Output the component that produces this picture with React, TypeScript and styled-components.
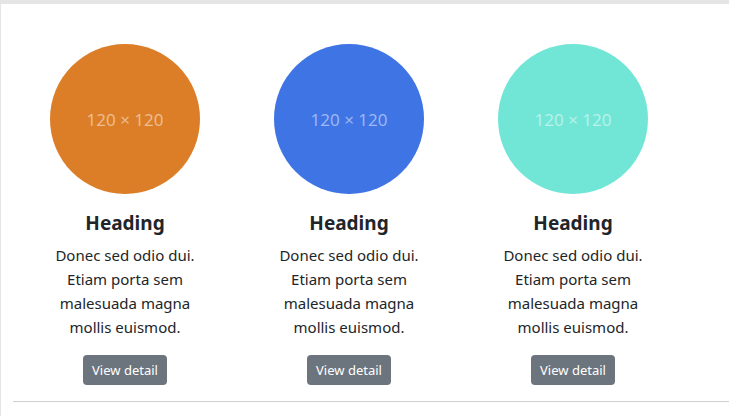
import React from "react";
import styled, { createGlobalStyle } from "styled-components";

const Global = createGlobalStyle`
  html, body { margin: 0; padding: 0; background: #fff; }
  body { font-family: "Noto Sans", "Open Sans", sans-serif; color: #212529; }
`;

const Frame = styled.div`
  border-top: 4px solid #e5e5e5;
  border-left: 1px solid #e5e5e5;
  min-height: 416px;
  box-sizing: border-box;
  padding: 40px 0 0 12px;
`;

const Row = styled.div`
  display: grid;
  grid-template-columns: repeat(3, 224px);
`;

const Col = styled.div`
  display: flex;
  flex-direction: column;
  align-items: center;
  text-align: center;
`;

const Circle = styled.div<{ $bg: string }>`
  width: 150px;
  height: 150px;
  border-radius: 50%;
  background: ${(p) => p.$bg};
  display: flex;
  align-items: center;
  justify-content: center;
  color: rgba(255, 255, 255, 0.5);
  font-family: "Open Sans", "Noto Sans", sans-serif;
  font-size: 17px;
`;

const Heading = styled.h2`
  margin: 17px 0 8px;
  font-size: 19px;
  line-height: 24px;
  font-weight: 700;
  color: #212529;
`;

const Text = styled.p`
  margin: 0 0 16px;
  width: 170px;
  font-size: 15px;
  line-height: 24px;
`;

const Button = styled.button`
  border: none;
  border-radius: 4px;
  background: #6c757d;
  color: #fff;
  font-family: inherit;
  font-size: 13px;
  height: 30px;
  padding: 0 9px;
  cursor: pointer;
`;

const Rule = styled.hr`
  margin: 16px 0 0;
  border: none;
  border-top: 1px solid #cfcfcf;
`;

const items = ["#dc7e27", "#3f74e5", "#72e6d6"];

export default function App() {
  return (
    <>
      <Global />
      <Frame>
        <Row>
          {items.map((c) => (
            <Col key={c}>
              <Circle $bg={c}>120 × 120</Circle>
              <Heading>Heading</Heading>
              <Text>Donec sed odio dui. Etiam porta sem malesuada magna mollis euismod.</Text>
              <Button>View detail</Button>
            </Col>
          ))}
        </Row>
        <Rule />
      </Frame>
    </>
  );
}
